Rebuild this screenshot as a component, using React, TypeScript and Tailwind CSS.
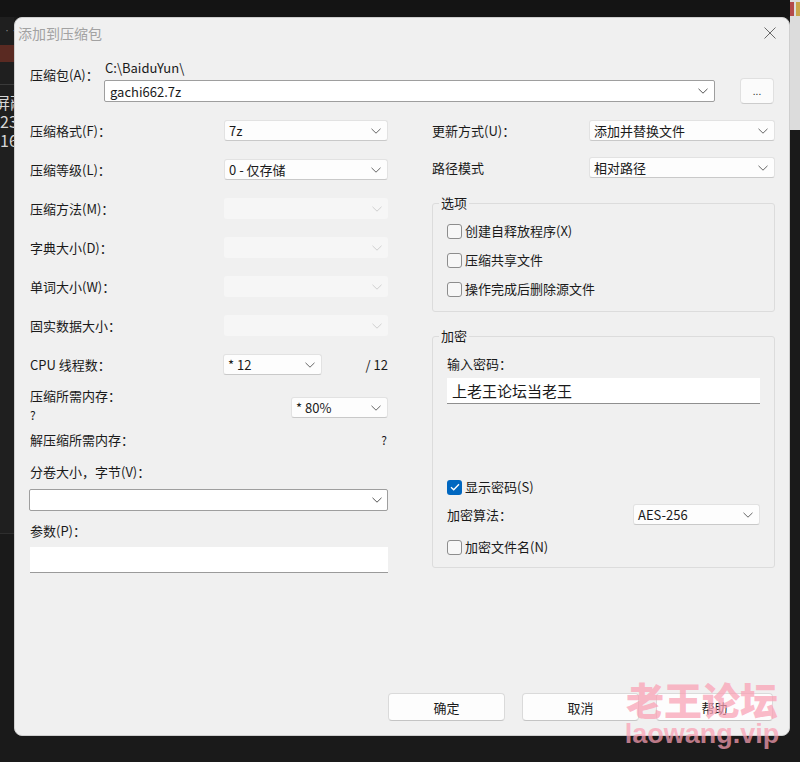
import React from "react";
import clsx from "clsx";

function Chevron({ c = "#5f5f5f" }: { c?: string }) {
  return (
    <svg width="10" height="6" viewBox="0 0 10 6" fill="none">
      <path d="M0.5 0.8L5 5.2L9.5 0.8" stroke={c} strokeWidth="1" />
    </svg>
  );
}

function Select({
  className,
  value,
  disabled,
}: {
  className?: string;
  value?: string;
  disabled?: boolean;
}) {
  return (
    <div
      className={clsx(
        "h-[21px] flex items-center justify-between pl-[4px] pr-[6px] rounded-[3px] shrink-0",
        disabled
          ? "bg-[#f6f6f6]"
          : "bg-[#fdfdfd] border border-[#e2e2e2] border-b-[#c9c9c9]",
        className
      )}
    >
      <span className="text-[13px] leading-none text-[#1a1a1a]">{value}</span>
      <Chevron c={disabled ? "#cfcfcf" : "#666666"} />
    </div>
  );
}

function Check({ checked, label }: { checked?: boolean; label: string }) {
  return (
    <div className="h-[20px] flex items-center gap-[3px]">
      {checked ? (
        <div className="w-[15px] h-[15px] rounded-[3px] bg-[#0067c0] flex items-center justify-center">
          <svg width="10" height="8" viewBox="0 0 10 8" fill="none">
            <path d="M1 4.2L3.7 6.8L9 1.2" stroke="#ffffff" strokeWidth="1.3" />
          </svg>
        </div>
      ) : (
        <div className="w-[15px] h-[15px] rounded-[3px] bg-[#f7f7f7] border border-[#8d8d8d]" />
      )}
      <span className="text-[13px] leading-[18px] text-[#1a1a1a]">{label}</span>
    </div>
  );
}

function Row({ label, value, disabled }: { label: string; value?: string; disabled?: boolean }) {
  return (
    <div className="h-[21px] flex items-center justify-between mb-[18px]">
      <span className="text-[13px] leading-[18px]">{label}</span>
      <Select className="w-[164px]" value={value} disabled={disabled} />
    </div>
  );
}

export default function App() {
  return (
    <div className="relative w-[800px] h-[762px] overflow-hidden bg-[#1a1a1a] font-['Noto_Sans_CJK_SC','Noto_Sans',sans-serif] text-[#1a1a1a]">
      {/* desktop background behind the window */}
      <div className="absolute left-0 top-0 w-[800px] h-[17px] bg-[#141414]" />
      <div className="absolute left-0 top-[17px] w-[14px] h-[516px] bg-[#1f1f1f]" />
      <div className="absolute left-0 top-[533px] w-[14px] h-[1px] bg-[#2e2e2e]" />
      <div className="absolute left-[4px] top-[28px] text-[6px] leading-none text-[#8a8a8a]">· ···</div>
      <div className="absolute left-0 top-[45px] w-[14px] h-[17px] bg-[#5a2a22]" />
      <div className="absolute left-0 top-[84px] w-[14px] h-[1px] bg-[#3a3a3a]" />
      <div className="absolute left-[-6px] top-[93px] flex flex-col text-[16px] leading-[19px] text-[#d6d6d6]">
        <span>屏蔽</span>
        <span className="pl-[6px]">23</span>
        <span className="pl-[6px]">16</span>
      </div>
      <div className="absolute left-[790px] top-0 w-[10px] h-[130px] bg-[#dcdcdc]" />
      <div className="absolute left-[790px] top-[2px] w-[4px] h-[14px] bg-[#b44a4a]" />
      <div className="absolute left-[796px] top-[2px] w-[4px] h-[14px] bg-[#c9a64a]" />

      {/* dialog window */}
      <div className="absolute left-[14px] top-[17px] w-[776px] h-[719px] rounded-[8px] bg-[#f0f0f0] border border-[#cfcfcf] flex flex-col">
        <div className="h-[30px] flex items-center justify-between pl-[3px] pr-[13px]">
          <span className="text-[14px] leading-none text-[#a2a2a2]">添加到压缩包</span>
          <svg width="12" height="12" viewBox="0 0 12 12" fill="none">
            <path d="M0.5 0.5L11.5 11.5M11.5 0.5L0.5 11.5" stroke="#6a6a6a" strokeWidth="1" />
          </svg>
        </div>

        <div className="pl-[15px] pr-[15px]">
          {/* archive row */}
          <div className="mt-[11px] flex items-start">
            <span className="w-[74px] pt-[7px] text-[13px] leading-[18px]">压缩包(A)：</span>
            <div className="flex-1 flex flex-col">
              <span className="pl-[1px] text-[13px] leading-[18px]">C:\BaiduYun\</span>
              <div className="mt-[3px] h-[22px] bg-white border border-[#9e9e9e] rounded-[2px] flex items-center justify-between pl-[5px] pr-[6px]">
                <span className="text-[13px] leading-none">gachi662.7z</span>
                <Chevron c="#555555" />
              </div>
            </div>
            <div className="ml-[25px] mt-[19px] w-[34px] h-[26px] rounded-[4px] bg-[#fbfbfb] border border-[#e0e0e0] border-b-[#cccccc] flex items-center justify-center text-[10px] leading-none text-[#333]">
              ...
            </div>
          </div>

          {/* two columns */}
          <div className="mt-[16px] grid grid-cols-[358px_343px] gap-x-[44px]">
            {/* left column */}
            <div className="flex flex-col">
              <Row label="压缩格式(F)：" value="7z" />
              <Row label="压缩等级(L)：" value="0 - 仅存储" />
              <Row label="压缩方法(M)：" disabled />
              <Row label="字典大小(D)：" disabled />
              <Row label="单词大小(W)：" disabled />
              <Row label="固实数据大小：" disabled />
              <div className="h-[21px] flex items-center">
                <span className="w-[193px] text-[13px] leading-[18px]">CPU 线程数：</span>
                <Select className="w-[99px]" value="*  12" />
                <span className="flex-1 text-right text-[13px] leading-[18px]">/ 12</span>
              </div>

              <div className="mt-[12px] flex justify-between items-start">
                <div className="flex flex-col">
                  <span className="text-[13px] leading-[18px]">压缩所需内存：</span>
                  <span className="mt-[1px] text-[12px] leading-[18px]">?</span>
                </div>
                <Select className="w-[97px] mt-[10px]" value="* 80%" />
              </div>

              <div className="mt-[7px] flex justify-between">
                <span className="text-[13px] leading-[18px]">解压缩所需内存：</span>
                <span className="pr-[1px] text-[12px] leading-[18px]">?</span>
              </div>

              <span className="mt-[14px] text-[13px] leading-[18px]">分卷大小，字节(V)：</span>
              <div className="mt-[8px] -ml-[1px] h-[22px] bg-white border border-[#9e9e9e] rounded-[2px] flex items-center justify-end pr-[5px]">
                <Chevron c="#555555" />
              </div>

              <span className="mt-[11px] text-[13px] leading-[18px]">参数(P)：</span>
              <div className="mt-[7px] h-[26px] bg-white border-b border-[#9a9a9a]" />
            </div>

            {/* right column */}
            <div className="flex flex-col">
              <div className="h-[21px] flex items-center justify-between">
                <span className="text-[13px] leading-[18px]">更新方式(U)：</span>
                <Select className="w-[186px]" value="添加并替换文件" />
              </div>
              <div className="mt-[16px] h-[21px] flex items-center justify-between">
                <span className="text-[13px] leading-[18px]">路径模式</span>
                <Select className="w-[186px]" value="相对路径" />
              </div>

              <fieldset className="mt-[16px] border border-[#dcdcdc] rounded-[3px] pl-[14px] pr-[14px] pt-[9px] pb-[12px]">
                <legend className="-ml-[8px] px-[2px] text-[13px] leading-[18px]">选项</legend>
                <div className="flex flex-col gap-[9px]">
                  <Check label="创建自释放程序(X)" />
                  <Check label="压缩共享文件" />
                  <Check label="操作完成后删除源文件" />
                </div>
              </fieldset>

              <fieldset className="mt-[15px] border border-[#dcdcdc] rounded-[3px] pl-[14px] pr-[14px] pt-[10px] pb-[10px]">
                <legend className="-ml-[8px] px-[2px] text-[13px] leading-[18px]">加密</legend>
                <span className="block text-[13px] leading-[18px]">输入密码：</span>
                <div className="mt-[5px] h-[26px] bg-white border-b border-[#8f8f8f] flex items-center pl-[5px]">
                  <span className="text-[15px] leading-none text-[#1a1a1a]">上老王论坛当老王</span>
                </div>
                <div className="mt-[73px]">
                  <Check checked label="显示密码(S)" />
                </div>
                <div className="mt-[7px] h-[21px] flex items-center justify-between">
                  <span className="text-[13px] leading-[18px]">加密算法：</span>
                  <Select className="w-[127px]" value="AES-256" />
                </div>
                <div className="mt-[12px]">
                  <Check label="加密文件名(N)" />
                </div>
              </fieldset>
            </div>
          </div>
        </div>

        {/* footer buttons */}
        <div className="mt-auto pb-[14px] pr-[16px] flex justify-end gap-[17px]">
          {["确定", "取消", "帮助"].map((t) => (
            <div
              key={t}
              className="w-[117px] h-[28px] rounded-[4px] bg-[#fdfdfd] border border-[#dadada] border-b-[#c4c4c4] flex items-center justify-center text-[13px] leading-none"
            >
              {t}
            </div>
          ))}
        </div>
      </div>

      {/* watermark overlay */}
      <div className="absolute left-[624px] top-[676px] w-[156px] flex flex-col items-center pointer-events-none">
        <span className="text-[38px] leading-[46px] font-black tracking-[0px] text-[rgba(250,160,180,0.72)]">老王论坛</span>
        <span className="-mt-[6px] text-[27px] leading-[36px] font-bold font-['Liberation_Sans',sans-serif] text-[rgba(250,160,180,0.72)]">laowang.vip</span>
      </div>
    </div>
  );
}
